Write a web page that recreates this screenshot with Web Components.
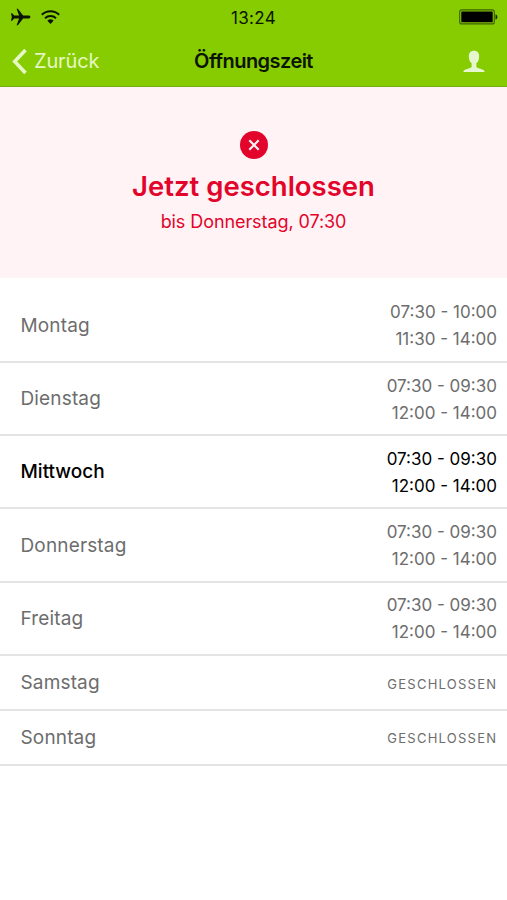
<!DOCTYPE html>
<html lang="de">
<head>
<meta charset="utf-8">
<title>Öffnungszeit</title>
<style>
    html, body {
        margin: 0;
        height: 100%;
        overflow: hidden;
        background: #fff;
        font-family: Inter, "Liberation Sans", sans-serif;
    }
</style>
</head>
<body>
<opening-hours-page></opening-hours-page>

<script>
class StatusBar extends HTMLElement {
    constructor() {
        super();
        this.attachShadow({ mode: 'open' });
        this.shadowRoot.innerHTML = `
            <style>
                :host {
                    display: grid;
                    grid-template-columns: 1fr auto 1fr;
                    align-items: center;
                    height: 34px;
                    padding: 0 9px 0 10px;
                    box-sizing: border-box;
                    color: #0b1400;
                }
                .left {
                    display: flex;
                    align-items: center;
                    gap: 10px;
                }
                .time {
                    padding-top: 1px;
                    padding-right: 1px;
                    font-size: 17px;
                    font-weight: 400;
                    letter-spacing: 0.3px;
                }
                .battery {
                    justify-self: end;
                }
                svg {
                    display: block;
                }
            </style>
            <div class="left">
                <svg width="21" height="18" viewBox="0 0 21 18">
                    <path fill="currentColor" d="M1 5.300h1.100l2.200 2.200h4.800L6.600.8h1.300l5.200 6.700h5.300c1.300 0 2 .7 2 1.500s-.7 1.500-2 1.500h-5.300l-5.200 6.700H6.600l2.500-6.700H4.300l-2.200 2.200H1L1.800 9z"/>
                </svg>
                <svg width="19" height="14" viewBox="0 0 19 14">
                    <g fill="none" stroke="currentColor" stroke-width="2">
                        <path d="M.8 4.700a12.500 12.500 0 0 1 17.400 0"/>
                        <path d="M4 8.200a8 8 0 0 1 11 0"/>
                    </g>
                    <path fill="currentColor" d="M6.400 10.800a4.500 4.500 0 0 1 6.200 0L9.500 13.900z"/>
                </svg>
            </div>
            <span class="time"><slot></slot></span>
            <svg class="battery" width="39" height="16" viewBox="0 0 39 16">
                <rect x=".7" y=".9" width="34.600" height="14" rx="2" fill="none" stroke="#3c6000" stroke-width="1.100"/>
                <rect x="2.300" y="2.500" width="31.400" height="10.800" rx=".5" fill="#000"/>
                <path d="M36.500 5.200c1.300.5 1.900 1.400 1.900 2.700s-.6 2.200-1.900 2.700z" fill="#1c2d00"/>
            </svg>
        `;
    }
}

class NavBar extends HTMLElement {
    constructor() {
        super();
        this.attachShadow({ mode: 'open' });
        this.shadowRoot.innerHTML = `
            <style>
                :host {
                    display: grid;
                    grid-template-columns: 1fr auto 1fr;
                    align-items: center;
                    height: 54px;
                    padding: 0 22px 0 12px;
                    box-sizing: border-box;
                }
                .back {
                    display: flex;
                    align-items: center;
                    gap: 6px;
                    color: #e6f7c6;
                    font-size: 20px;
                    letter-spacing: -0.15px;
                }
                .title {
                    padding-left: 10px;
                    color: #0b1400;
                    font-size: 20px;
                    font-weight: 600;
                    letter-spacing: -0.55px;
                }
                .profile {
                    justify-self: end;
                }
                svg {
                    display: block;
                }
            </style>
            <div class="back">
                <svg width="16" height="27" viewBox="0 0 16 27">
                    <path d="M13.500 2L2.700 13.500l10.800 11.500" fill="none" stroke="currentColor" stroke-width="3.600"/>
                </svg>
                <slot name="back"></slot>
            </div>
            <span class="title"><slot></slot></span>
            <svg class="profile" width="22" height="23" viewBox="0 0 23 23">
                <path fill="#e6f7d0" d="M11.500.2c3.400 0 5.400 2.300 5.400 5.700 0 3.600-1.300 6.100-2.900 7.500v3.200c0 1 .7 1.300 1.800 1.700l4.500 1.500c1.600.6 2.200 1.300 2.300 2.700H.4c.1-1.400.7-2.100 2.300-2.700l4.500-1.500c1.100-.4 1.800-.7 1.800-1.700v-3.200C7.400 12 6.100 9.500 6.100 5.900 6.100 2.500 8.100.2 11.500.2z"/>
            </svg>
        `;
    }
}

class StatusNotice extends HTMLElement {
    constructor() {
        super();
        this.attachShadow({ mode: 'open' });
        this.shadowRoot.innerHTML = `
            <style>
                :host {
                    display: flex;
                    flex-direction: column;
                    align-items: center;
                    height: 191px;
                    padding-top: 44px;
                    box-sizing: border-box;
                    background: #fff3f5;
                    color: #e2042a;
                }
                svg {
                    display: block;
                }
                .headline {
                    margin-top: 10px;
                    font-size: 27.500px;
                    line-height: 34px;
                    font-weight: 600;
                }
                .detail {
                    margin-top: 7px;
                    font-size: 18px;
                    line-height: 24px;
                    letter-spacing: -0.08px;
                }
            </style>
            <svg width="28" height="28" viewBox="0 0 28 28">
                <circle cx="14" cy="14" r="14" fill="currentColor"/>
                <path d="M9.300 9.300l9.400 9.400M18.700 9.300l-9.400 9.400" stroke="#fff3f5" stroke-width="2.200"/>
            </svg>
            <div class="headline"><slot></slot></div>
            <div class="detail"><slot name="detail"></slot></div>
        `;
    }
}

class DayRow extends HTMLElement {
    constructor() {
        super();
        this.attachShadow({ mode: 'open' });
    }

    connectedCallback() {
        const hours = this.getAttribute('hours');
        const times = hours
            ? hours.split(',').map(time => `<div>${time}</div>`).join('')
            : '<div class="closed">GESCHLOSSEN</div>';

        this.shadowRoot.innerHTML = `
            <style>
                :host {
                    display: flex;
                    justify-content: space-between;
                    align-items: center;
                    height: ${hours ? 73.3 : 54.9}px;
                    padding: 0 10px 0 20.500px;
                    box-sizing: border-box;
                    border-bottom: 2px solid #e4e4e4;
                    color: #6d6d6d;
                }
                :host([today]) {
                    color: #000;
                }
                .day {
                    font-size: 19px;
                    letter-spacing: 0.15px;
                }
                :host([today]) .day {
                    font-weight: 500;
                    letter-spacing: 0;
                }
                .times {
                    padding-top: 2px;
                    font-size: 17px;
                    line-height: 27px;
                    text-align: right;
                }
                .closed {
                    padding-top: 1px;
                    font-size: 13px;
                    letter-spacing: 1.250px;
                    margin-right: -0.3px;
                }
            </style>
            <span class="day"><slot></slot></span>
            <div class="times">${times}</div>
        `;
    }
}

class OpeningHoursPage extends HTMLElement {
    constructor() {
        super();
        this.attachShadow({ mode: 'open' });
        this.shadowRoot.innerHTML = `
            <style>
                :host {
                    display: block;
                }
                header {
                    height: 87px;
                    box-sizing: border-box;
                    background: #86cc00;
                    border-bottom: 1px solid #76ac14;
                }
                main {
                    padding-top: 11.600px;
                }
            </style>
            <header>
                <status-bar>13:24</status-bar>
                <nav-bar><span slot="back">Zurück</span>Öffnungszeit</nav-bar>
            </header>
            <status-notice>Jetzt geschlossen<span slot="detail">bis Donnerstag, 07:30</span></status-notice>
            <main>
                <day-row hours="07:30 - 10:00,11:30 - 14:00">Montag</day-row>
                <day-row hours="07:30 - 09:30,12:00 - 14:00">Dienstag</day-row>
                <day-row hours="07:30 - 09:30,12:00 - 14:00" today>Mittwoch</day-row>
                <day-row hours="07:30 - 09:30,12:00 - 14:00">Donnerstag</day-row>
                <day-row hours="07:30 - 09:30,12:00 - 14:00">Freitag</day-row>
                <day-row>Samstag</day-row>
                <day-row>Sonntag</day-row>
            </main>
        `;
    }
}

customElements.define('status-bar', StatusBar);
customElements.define('nav-bar', NavBar);
customElements.define('status-notice', StatusNotice);
customElements.define('day-row', DayRow);
customElements.define('opening-hours-page', OpeningHoursPage);
</script>
</body>
</html>
